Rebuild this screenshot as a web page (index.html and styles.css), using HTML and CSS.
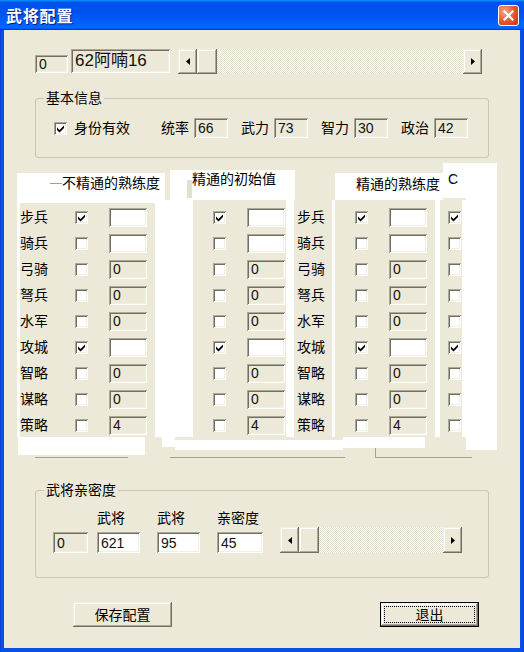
FILE: index.html
```html
<!DOCTYPE html>
<html lang="zh">
<head>
<meta charset="utf-8">
<title>武将配置</title>
<link rel="stylesheet" href="styles.css">
</head>
<body>
<div class="window">
  <div class="titlebar">
    <span class="title">武将配置</span>
    <div class="close"><svg width="11" height="11" viewBox="0 0 11 11"><path d="M1.5 1.5L9.5 9.5M9.5 1.5L1.5 9.5" stroke="#fff" stroke-width="2.2" stroke-linecap="square"/></svg></div>
  </div>
  <div class="client">
    <div class="top-row">
      <div class="tb ro id-box">0</div>
      <div class="tb ro name-box">62阿喃16</div>
      <div class="scrollbar sb-top">
        <div class="sb-btn"><svg width="4" height="7" viewBox="0 0 4 7"><path d="M4 0V7L0 3.5Z"/></svg></div>
        <div class="sb-thumb"></div>
        <div class="sb-track"></div>
        <div class="sb-btn"><svg width="4" height="7" viewBox="0 0 4 7"><path d="M0 0V7L4 3.5Z"/></svg></div>
      </div>
    </div>

    <div class="group basic">
      <span class="legend">基本信息</span>
      <div class="basic-row">
        <span class="cb"><svg class="ck" width="7" height="8" viewBox="0 0 7 8"><path d="M0 2.5L2.5 5L7 0.5V3L2.5 7.5L0 5Z"/></svg></span>
        <span class="chk-label">身份有效</span>
        <span class="stat-label first">统率</span><span class="tb ro stat-box">66</span>
        <span class="stat-label">武力</span><span class="tb ro stat-box">73</span>
        <span class="stat-label">智力</span><span class="tb ro stat-box">30</span>
        <span class="stat-label">政治</span><span class="tb ro stat-box">42</span>
      </div>
    </div>

    <div class="skills">
      <div class="sk-head">
        <div class="hA"><span class="gl"></span><span>不精通的熟练度</span></div>
        <div class="hB"><span class="gbar"></span><span class="hB-text">精通的初始值</span></div>
        <div class="hC"><span>精通的熟练度</span></div>
        <div class="hD">C</div>
        <div class="hE"></div>
      </div>
      <div class="sk-body">
        <div class="panel p1">
          <div class="row"><span class="lbl">步兵</span><span class="cb"><svg class="ck" width="7" height="8" viewBox="0 0 7 8"><path d="M0 2.5L2.5 5L7 0.5V3L2.5 7.5L0 5Z"/></svg></span><span class="tb"></span></div>
          <div class="row"><span class="lbl">骑兵</span><span class="cb"></span><span class="tb"></span></div>
          <div class="row"><span class="lbl">弓骑</span><span class="cb"></span><span class="tb ro">0</span></div>
          <div class="row"><span class="lbl">弩兵</span><span class="cb"></span><span class="tb ro">0</span></div>
          <div class="row"><span class="lbl">水军</span><span class="cb"></span><span class="tb ro">0</span></div>
          <div class="row"><span class="lbl">攻城</span><span class="cb"><svg class="ck" width="7" height="8" viewBox="0 0 7 8"><path d="M0 2.5L2.5 5L7 0.5V3L2.5 7.5L0 5Z"/></svg></span><span class="tb"></span></div>
          <div class="row"><span class="lbl">智略</span><span class="cb"></span><span class="tb ro">0</span></div>
          <div class="row"><span class="lbl">谋略</span><span class="cb"></span><span class="tb ro">0</span></div>
          <div class="row"><span class="lbl">策略</span><span class="cb"></span><span class="tb ro">4</span></div>
        </div>
        <div class="panel p2">
          <div class="row"><span class="cb"><svg class="ck" width="7" height="8" viewBox="0 0 7 8"><path d="M0 2.5L2.5 5L7 0.5V3L2.5 7.5L0 5Z"/></svg></span><span class="tb"></span></div>
          <div class="row"><span class="cb"></span><span class="tb"></span></div>
          <div class="row"><span class="cb"></span><span class="tb ro">0</span></div>
          <div class="row"><span class="cb"></span><span class="tb ro">0</span></div>
          <div class="row"><span class="cb"></span><span class="tb ro">0</span></div>
          <div class="row"><span class="cb"><svg class="ck" width="7" height="8" viewBox="0 0 7 8"><path d="M0 2.5L2.5 5L7 0.5V3L2.5 7.5L0 5Z"/></svg></span><span class="tb"></span></div>
          <div class="row"><span class="cb"></span><span class="tb ro">0</span></div>
          <div class="row"><span class="cb"></span><span class="tb ro">0</span></div>
          <div class="row"><span class="cb"></span><span class="tb ro">4</span></div>
        </div>
        <div class="panel p3l">
          <div class="row"><span class="lbl">步兵</span></div>
          <div class="row"><span class="lbl">骑兵</span></div>
          <div class="row"><span class="lbl">弓骑</span></div>
          <div class="row"><span class="lbl">弩兵</span></div>
          <div class="row"><span class="lbl">水军</span></div>
          <div class="row"><span class="lbl">攻城</span></div>
          <div class="row"><span class="lbl">智略</span></div>
          <div class="row"><span class="lbl">谋略</span></div>
          <div class="row"><span class="lbl">策略</span></div>
        </div>
        <div class="panel p3">
          <div class="row"><span class="cb"><svg class="ck" width="7" height="8" viewBox="0 0 7 8"><path d="M0 2.5L2.5 5L7 0.5V3L2.5 7.5L0 5Z"/></svg></span><span class="tb"></span></div>
          <div class="row"><span class="cb"></span><span class="tb"></span></div>
          <div class="row"><span class="cb"></span><span class="tb ro">0</span></div>
          <div class="row"><span class="cb"></span><span class="tb ro">0</span></div>
          <div class="row"><span class="cb"></span><span class="tb ro">0</span></div>
          <div class="row"><span class="cb"><svg class="ck" width="7" height="8" viewBox="0 0 7 8"><path d="M0 2.5L2.5 5L7 0.5V3L2.5 7.5L0 5Z"/></svg></span><span class="tb"></span></div>
          <div class="row"><span class="cb"></span><span class="tb ro">0</span></div>
          <div class="row"><span class="cb"></span><span class="tb ro">0</span></div>
          <div class="row"><span class="cb"></span><span class="tb ro">4</span></div>
        </div>
        <div class="panel p4">
          <div class="row"><span class="cb"><svg class="ck" width="7" height="8" viewBox="0 0 7 8"><path d="M0 2.5L2.5 5L7 0.5V3L2.5 7.5L0 5Z"/></svg></span></div>
          <div class="row"><span class="cb"></span></div>
          <div class="row"><span class="cb"></span></div>
          <div class="row"><span class="cb"></span></div>
          <div class="row"><span class="cb"></span></div>
          <div class="row"><span class="cb"><svg class="ck" width="7" height="8" viewBox="0 0 7 8"><path d="M0 2.5L2.5 5L7 0.5V3L2.5 7.5L0 5Z"/></svg></span></div>
          <div class="row"><span class="cb"></span></div>
          <div class="row"><span class="cb"></span></div>
          <div class="row"><span class="cb"></span></div>
        </div>
      </div>
      <div class="sk-foot">
        <div class="band"><span class="f1"></span><span class="f2"></span><span class="f3"></span><span class="f4"></span><span class="f5"></span></div>
        <div class="lines"><span class="l1"></span><span class="l2"></span><span class="l3"></span></div>
      </div>
    </div>

    <div class="group affinity">
      <span class="legend">武将亲密度</span>
      <div class="aff-row">
        <span class="tb ro a0">0</span>
        <div class="aff-col a1"><span class="albl">武将</span><span class="tb">621</span></div>
        <div class="aff-col a2"><span class="albl">武将</span><span class="tb">95</span></div>
        <div class="aff-col a3"><span class="albl">亲密度</span><span class="tb">45</span></div>
        <div class="scrollbar sb-aff">
          <div class="sb-btn"><svg width="4" height="7" viewBox="0 0 4 7"><path d="M4 0V7L0 3.5Z"/></svg></div>
          <div class="sb-thumb"></div>
          <div class="sb-track"></div>
          <div class="sb-btn"><svg width="4" height="7" viewBox="0 0 4 7"><path d="M0 0V7L4 3.5Z"/></svg></div>
        </div>
      </div>
    </div>

    <div class="btn-row">
      <div class="btn">保存配置</div>
      <div class="btn btn-exit"><span class="focus">退出</span></div>
    </div>
  </div>
</div>
</body>
</html>
```

FILE: styles.css
```css
* { box-sizing: border-box; }
html, body { margin: 0; padding: 0; }
body {
  width: 524px;
  height: 652px;
  overflow: hidden;
  font-family: "Liberation Sans", "Noto Sans CJK SC", sans-serif;
  font-size: 14px;
  line-height: 16px;
  color: #000;
  background: #0b4de3;
}
.window {
  width: 524px;
  height: 652px;
  display: flex;
  flex-direction: column;
  background: linear-gradient(90deg, #0a3fd6 0, #0b50e6 2px, #0b50e6 522px, #0a3fd6 524px);
}
.titlebar {
  height: 30px;
  flex: none;
  display: flex;
  align-items: center;
  justify-content: space-between;
  padding: 0 5px 0 6px;
  background: linear-gradient(180deg, #0997ff, #0053ee 8%, #0050ee 40%, #06f 88%, #06f 93%, #005bff 95%, #003dd7 96%, #003dd7);
}
.title {
  color: #fff;
  font-family: "Noto Sans CJK SC", sans-serif;
  font-weight: bold;
  font-size: 16px;
  letter-spacing: 0.8px;
  text-shadow: 1px 1px #0a1883;
}
.close {
  width: 21px;
  height: 21px;
  border: 1px solid #fff;
  border-radius: 3px;
  background: radial-gradient(circle at 30% 30%, #f4a58a, #e2542f 55%, #c03812);
  display: flex;
  align-items: center;
  justify-content: center;
  margin-top: 1px;
}
.client {
  flex: 1;
  margin: 0 4px 4px;
  background: #ECE9D8;
  display: flex;
  flex-direction: column;
}

/* common controls */
.tb {
  display: flex;
  align-items: center;
  padding-left: 4px;
  background: #fff;
  box-shadow: inset 1px 1px #aca899, inset -1px -1px #fff, inset 2px 2px #716f64, inset -2px -2px #f1efe2;
  color: #111;
  flex: none;
  white-space: nowrap;
}
.tb.ro { background: #ECE9D8; }
.cb {
  width: 13px;
  height: 13px;
  flex: none;
  display: flex;
  align-items: center;
  justify-content: center;
  background: #fff;
  box-shadow: inset 1px 1px #aca899, inset -1px -1px #fff, inset 2px 2px #716f64, inset -2px -2px #f1efe2;
}
.ck { display: block; fill: #000; margin: 1px 0 0 0; }
.scrollbar { display: flex; flex: none; }
.sb-btn, .sb-thumb, .btn {
  background: #ECE9D8;
  box-shadow: inset -1px -1px #716f64, inset 1px 1px #f1efe2, inset -2px -2px #aca899, inset 2px 2px #fff;
}
.sb-btn {
  width: 19px;
  flex: none;
  display: flex;
  align-items: center;
  justify-content: center;
}
.sb-btn svg { display: block; fill: #000; }
.sb-thumb { width: 20px; flex: none; }
.sb-track {
  flex: 1;
  background: repeating-conic-gradient(#fff 0 25%, #e2dfcf 0 50%) 0 0 / 2px 2px;
}

/* top row */
.top-row {
  display: flex;
  align-items: flex-start;
  margin-top: 19px;
  padding-left: 31px;
  height: 25px;
}
.id-box { width: 33px; height: 18px; margin-top: 6px; }
.name-box { width: 99px; height: 24px; margin-left: 3px; font-size: 17px; padding-left: 4px; }
.sb-top { width: 304px; height: 25px; margin-left: 8px; }

/* group boxes */
.group {
  position: relative;
  border: 1px solid #c9c6b6;
  border-radius: 3px;
  margin-left: 31px;
  width: 454px;
  flex: none;
}
.legend {
  position: absolute;
  top: -9px;
  left: 8px;
  padding: 0 2px;
  background: #ECE9D8;
  line-height: 16px;
}
.basic { margin-top: 24px; height: 60px; padding: 19px 0 0 18px; }
.basic-row { display: flex; align-items: center; height: 20px; }
.chk-label { margin-left: 7px; }
.stat-label { margin-left: 13px; }
.stat-label.first { margin-left: 31px; }
.stat-box { width: 34px; height: 20px; margin-left: 5px; }

/* skills area */
.skills {
  margin-top: 2px;
  height: 300px;
  flex: none;
  display: flex;
  flex-direction: column;
}
.sk-head { height: 40px; display: flex; align-items: flex-start; flex: none; }
.hA {
  margin-left: 13px;
  width: 148px;
  margin-top: 13px;
  height: 27px;
  background: #fff;
  display: flex;
  align-items: flex-start;
  padding: 2px 0 0 33px;
}
.gl { width: 12px; height: 1px; background: #a3a093; margin-top: 8px; }
.hB {
  margin-left: 5px;
  width: 125px;
  margin-top: 10px;
  height: 30px;
  background: #fff;
  display: flex;
  align-items: flex-start;
  padding-left: 17px;
}
.gbar { width: 5px; height: 18px; margin-top: 10px; background: #e2dfd1; }
.hB-text { margin-top: 1px; }
.hC {
  margin-left: 40px;
  width: 108px;
  margin-top: 13px;
  height: 27px;
  background: #fff;
  padding: 3px 0 0 21px;
}
.hD {
  width: 23px;
  margin-top: 3px;
  height: 35px;
  background: #fff;
  padding: 8px 0 0 5px;
  font-size: 14px;
}
.hE { width: 31px; margin-top: 3px; height: 37px; background: #fff; }

.sk-body {
  height: 237px;
  flex: none;
  display: flex;
  align-items: flex-start;
  margin-left: 13px;
  width: 480px;
  background: #fff;
}
.panel { background: #ECE9D8; height: 237px; padding-top: 4px; }
.p1 { margin-left: 3px; width: 135px; margin-top: 3px; height: 234px; padding-top: 1px; }
.p2 { margin-left: 38px; width: 93px; padding-left: 20px; }
.p3l { margin-left: 8px; width: 38px; padding-left: 3px; }
.p3 { margin-left: 3px; width: 100px; padding-left: 20px; }
.p4 { margin-left: 5px; width: 22px; padding-left: 8px; }
.row { height: 26px; display: flex; align-items: center; }
.lbl { width: 28px; flex: none; white-space: nowrap; }
.p1 .cb { margin-left: 27px; }
.row .tb { width: 38px; height: 19px; margin-left: 21px; }

.sk-foot { height: 23px; flex: none; display: flex; flex-direction: column; }
.band { height: 18px; display: flex; align-items: flex-start; flex: none; }
.f1 { margin-left: 14px; width: 127px; height: 18px; background: #fff; }
.f2 { margin-left: 17px; width: 13px; height: 10px; background: #fff; }
.f3 { width: 168px; margin-top: 3px; height: 10px; background: #fff; }
.f4 { width: 82px; height: 11px; background: #fff; }
.f5 { margin-left: 41px; width: 31px; height: 13px; background: #fff; }
.lines { height: 5px; display: flex; align-items: flex-start; flex: none; }
.l1 { margin-left: 31px; width: 93px; height: 1px; margin-top: 2px; background: #a3a093; }
.l2 { margin-left: 42px; width: 175px; height: 1px; margin-top: 2px; background: #a3a093; }
.l3 {
  margin-left: 30px;
  width: 97px;
  height: 10px;
  margin-top: -7px;
  border-left: 1px solid #a3a093;
  border-bottom: 1px solid #a3a093;
}

/* affinity */
.affinity { margin-top: 30px; height: 88px; padding: 19px 0 0 17px; }
.aff-row { display: flex; align-items: flex-end; }
.aff-row .tb { height: 21px; }
.a0 { width: 35px; }
.aff-col { display: flex; flex-direction: column; flex: none; }
.albl { height: 16px; margin-bottom: 6px; white-space: nowrap; }
.a1 { margin-left: 9px; width: 43px; }
.a2 { margin-left: 17px; width: 43px; }
.a3 { margin-left: 17px; width: 46px; }
.sb-aff { margin-left: 17px; width: 182px; height: 26px; }

/* buttons */
.btn-row { margin-top: 24px; display: flex; padding-left: 69px; flex: none; }
.btn {
  width: 99px;
  height: 25px;
  display: flex;
  align-items: center;
  justify-content: center;
  flex: none;
}
.btn-exit {
  margin-left: 208px;
  border: 1px solid #000;
  padding: 3px;
}
.focus {
  flex: 1;
  align-self: stretch;
  border: 1px dotted #000;
  display: flex;
  align-items: center;
  justify-content: center;
}
```
